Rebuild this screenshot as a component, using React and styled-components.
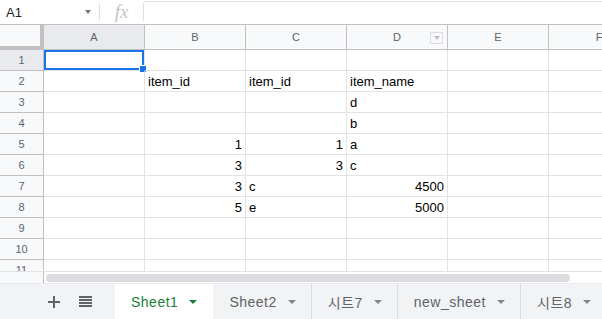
import React from 'react';
import styled, { createGlobalStyle } from 'styled-components';

const GlobalStyle = createGlobalStyle`
  body {
    margin: 0;
    background: #fff;
    font-family: "Liberation Sans", Arial, sans-serif;
  }
`;

const columns = ['A', 'B', 'C', 'D', 'E', 'F'];

// each row: cells for A..F, { v, align }
const rows = [
  {},
  { B: { v: 'item_id' }, C: { v: 'item_id' }, D: { v: 'item_name' } },
  { D: { v: 'd' } },
  { D: { v: 'b' } },
  { B: { v: '1', align: 'right' }, C: { v: '1', align: 'right' }, D: { v: 'a' } },
  { B: { v: '3', align: 'right' }, C: { v: '3', align: 'right' }, D: { v: 'c' } },
  { B: { v: '3', align: 'right' }, C: { v: 'c' }, D: { v: '4500', align: 'right' } },
  { B: { v: '5', align: 'right' }, C: { v: 'e' }, D: { v: '5000', align: 'right' } },
  {},
  {},
  {},
];

const tabs = [
  { name: 'Sheet1', active: true },
  { name: 'Sheet2' },
  { name: '시트7' },
  { name: 'new_sheet' },
  { name: '시트8' },
];

function App() {
  return (
    <>
      <GlobalStyle />
      <Page>
        <FormulaBar>
          <NameBox>
            A1
            <Caret />
          </NameBox>
          <Divider />
          <FxLabel>fx</FxLabel>
          <Divider />
          <FormulaInput />
        </FormulaBar>

        <Grid>
          <Corner />
          {columns.map((c) => (
            <ColHeader key={c} selected={c === 'A'}>
              {c}
              {c === 'D' && (
                <FilterButton>
                  <Caret />
                </FilterButton>
              )}
            </ColHeader>
          ))}
          {rows.map((row, i) => (
            <React.Fragment key={i}>
              <RowHeader selected={i === 0}>{i + 1}</RowHeader>
              {columns.map((c) => (
                <Cell key={c} align={row[c] ? row[c].align : 'left'}>
                  {row[c] ? row[c].v : ''}
                  {i === 0 && c === 'A' && (
                    <Selection>
                      <Handle />
                    </Selection>
                  )}
                </Cell>
              ))}
            </React.Fragment>
          ))}
        </Grid>

        <ScrollStrip>
          <ScrollCorner />
          <ScrollTrack>
            <ScrollThumb />
          </ScrollTrack>
        </ScrollStrip>

        <TabBar>
          <IconButton>
            <svg width="12" height="12" viewBox="0 0 12 12">
              <path d="M5 0h2v5h5v2H7v5H5V7H0V5h5z" fill="#5f6368" />
            </svg>
          </IconButton>
          <IconButton>
            <svg width="13" height="11" viewBox="0 0 13 11">
              <path d="M0 0h13v2H0zM0 3h13v2H0zM0 6h13v2H0zM0 9h13v2H0z" fill="#5f6368" />
            </svg>
          </IconButton>
          <Tabs>
            {tabs.map((t) => (
              <Tab key={t.name} active={t.active}>
                {t.name}
                <TabArrow active={t.active} />
              </Tab>
            ))}
          </Tabs>
        </TabBar>
      </Page>
    </>
  );
}

export default App;

const Page = styled.div`
  width: 602px;
  height: 319px;
  overflow: hidden;
  display: flex;
  flex-direction: column;
`;

const FormulaBar = styled.div`
  height: 24px;
  flex: none;
  display: flex;
  align-items: center;
  border-bottom: 1px solid #c0c0c0;
  background: #fff;
`;

const NameBox = styled.div`
  width: 99px;
  height: 100%;
  box-sizing: border-box;
  padding: 0 8px 0 6px;
  display: flex;
  align-items: center;
  justify-content: space-between;
  font-size: 13px;
  color: #202124;
`;

const Caret = styled.span`
  width: 0;
  height: 0;
  border-left: 3.5px solid transparent;
  border-right: 3.5px solid transparent;
  border-top: 4px solid #757575;
`;

const Divider = styled.div`
  width: 1px;
  height: 18px;
  background: #e0e0e0;
  flex: none;
`;

const FxLabel = styled.div`
  width: 43px;
  text-align: center;
  font-family: "Liberation Serif", serif;
  font-style: italic;
  font-size: 19px;
  color: #c4c4c4;
  line-height: 24px;
`;

const FormulaInput = styled.div`
  flex: 1;
  align-self: stretch;
  border-top: 1.5px solid #e0e0e0;
  margin-top: 1px;
`;

const Grid = styled.div`
  height: 246px;
  flex: none;
  display: grid;
  grid-template-columns: 44px repeat(6, 101px);
  grid-template-rows: 25px repeat(11, 21px);
  overflow: hidden;
  border-bottom: 1px solid #e2e3e3;
`;

const Corner = styled.div`
  background: #f8f9fa;
  box-sizing: border-box;
  border-right: 4px solid #c0c0c0;
  border-bottom: 4px solid #c0c0c0;
`;

const ColHeader = styled.div`
  position: relative;
  box-sizing: border-box;
  border-right: 1px solid #c0c0c0;
  border-bottom: 1px solid #c0c0c0;
  background: ${(p) => (p.selected ? '#e8eaed' : '#f8f9fa')};
  color: #5f6368;
  font-size: 11px;
  display: flex;
  align-items: center;
  justify-content: center;
`;

const FilterButton = styled.div`
  position: absolute;
  right: 4px;
  top: 7px;
  width: 13px;
  height: 12px;
  box-sizing: border-box;
  border: 1px solid #dadce0;
  background: #f8f9fa;
  display: flex;
  align-items: center;
  justify-content: center;
  & > span {
    border-top-color: #bdbdbd;
  }
`;

const RowHeader = styled.div`
  box-sizing: border-box;
  border-right: 1px solid #c0c0c0;
  border-bottom: 1px solid #c0c0c0;
  background: ${(p) => (p.selected ? '#e8eaed' : '#f8f9fa')};
  color: #5f6368;
  font-size: 11px;
  display: flex;
  align-items: center;
  justify-content: center;
`;

const Cell = styled.div`
  position: relative;
  box-sizing: border-box;
  border-right: 1px solid #e2e3e3;
  border-bottom: 1px solid #e2e3e3;
  padding: 0 3px;
  font-size: 13px;
  color: #000;
  display: flex;
  align-items: center;
  justify-content: ${(p) => (p.align === 'right' ? 'flex-end' : 'flex-start')};
  white-space: nowrap;
`;

const Selection = styled.div`
  position: absolute;
  left: 0;
  top: 0;
  right: 0;
  bottom: 0;
  border: 2px solid #1a73e8;
`;

const Handle = styled.div`
  position: absolute;
  right: -5px;
  bottom: -5px;
  width: 6px;
  height: 6px;
  background: #1a73e8;
  border: 1px solid #fff;
`;

const ScrollStrip = styled.div`
  height: 11px;
  flex: none;
  display: flex;
`;

const ScrollCorner = styled.div`
  width: 44px;
  box-sizing: border-box;
  border-right: 1px solid #c0c0c0;
  background: #f8f9fa;
`;

const ScrollTrack = styled.div`
  flex: 1;
  padding: 2px 32px 1px 2px;
`;

const ScrollThumb = styled.div`
  height: 100%;
  border-radius: 5px;
  background: #dadce0;
`;

const TabBar = styled.div`
  flex: 1;
  display: flex;
  align-items: stretch;
  background: #f1f3f4;
  border-top: 1px solid #e8eaed;
  padding-left: 43px;
`;

const IconButton = styled.div`
  flex: none;
  width: 22px;
  margin-right: 9px;
  display: flex;
  align-items: center;
  justify-content: center;
`;

const Tabs = styled.div`
  flex: none;
  display: flex;
  margin-left: 10px;
`;

const Tab = styled.div`
  flex: none;
  display: flex;
  align-items: center;
  gap: 11px;
  padding: 0 15px 0 16px;
  font-family: "Liberation Sans", "Noto Sans CJK KR", sans-serif;
  font-size: 14px;
  letter-spacing: 0.5px;
  white-space: nowrap;
  color: ${(p) => (p.active ? '#188038' : '#5f6368')};
  background: ${(p) => (p.active ? '#fff' : 'transparent')};
  border-right: 1px solid ${(p) => (p.active ? 'transparent' : '#dadce0')};
`;

const TabArrow = styled.span`
  width: 0;
  height: 0;
  border-left: 4px solid transparent;
  border-right: 4px solid transparent;
  border-top: 4px solid ${(p) => (p.active ? '#188038' : '#80868b')};
`;
